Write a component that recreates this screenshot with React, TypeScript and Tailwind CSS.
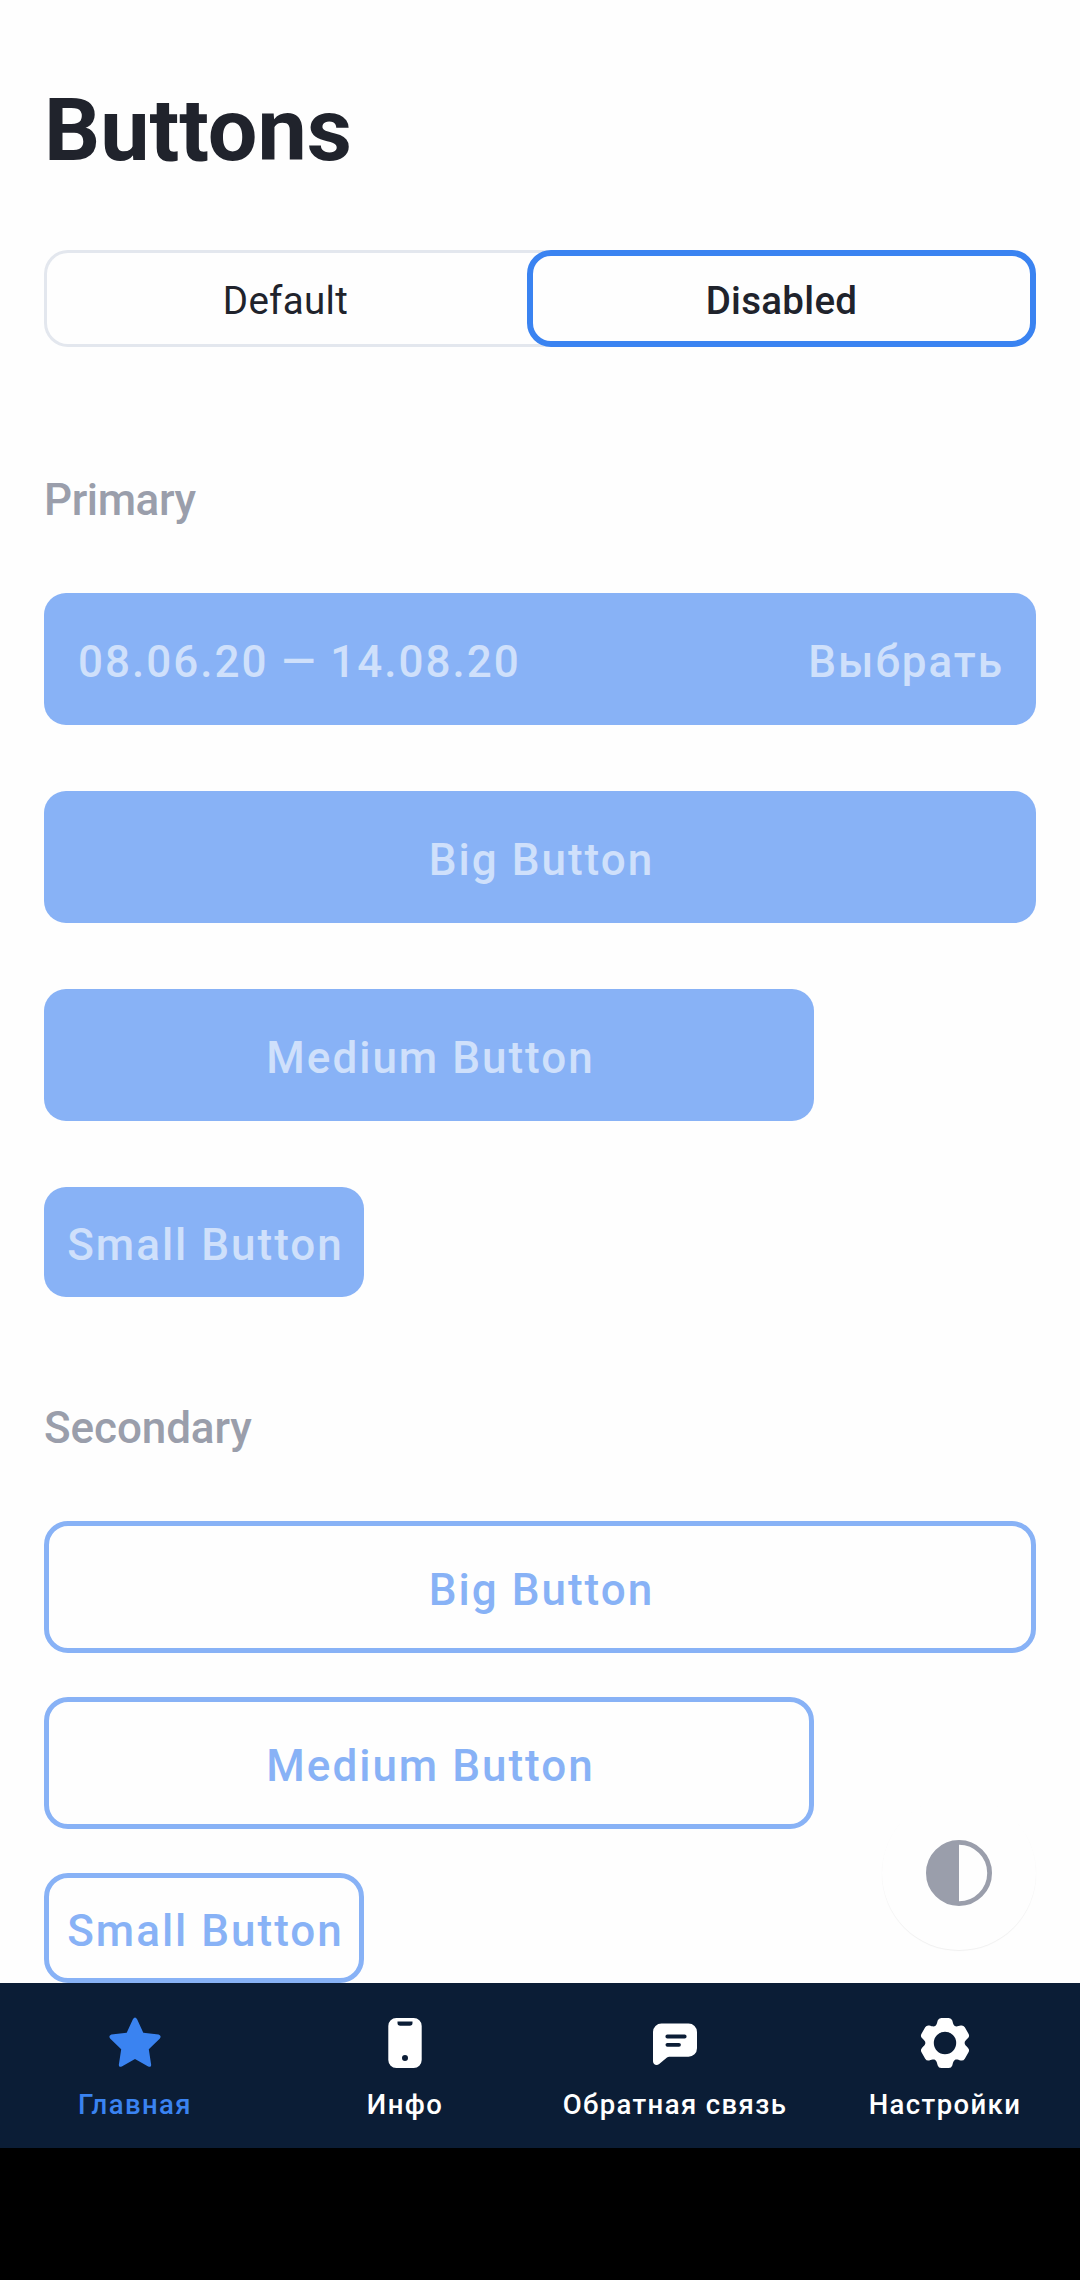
import type { ReactNode } from 'react';

function Heading({ children, className }: { children: ReactNode; className: string }) {
  return (
    <h2 className={`text-[44px] leading-[52px] font-medium text-[#9a9eab] ${className}`}>
      {children}
    </h2>
  );
}

const sizes = {
  big: 'w-full h-[132px]',
  medium: 'w-[770px] h-[132px]',
  small: 'w-[320px] h-[110px]',
};

const variants = {
  primary: 'bg-[#88b2f6] text-[#cfe0fb] rounded-[22px]',
  secondary: 'border-[5px] border-[#88b2f6] text-[#88b2f6] rounded-[24px]',
};

function Button({
  size,
  variant,
  children,
}: {
  size: keyof typeof sizes;
  variant: keyof typeof variants;
  children: ReactNode;
}) {
  return (
    <button
      disabled
      className={`flex items-center justify-center whitespace-nowrap pt-[6px] pl-[3px] text-[44px] leading-[52px] font-medium tracking-[2px] ${sizes[size]} ${variants[variant]}`}
    >
      {children}
    </button>
  );
}

function StarIcon() {
  return (
    <svg viewBox="0 0 66 66" className="size-[66px]" fill="currentColor">
      <path d="M30.9 9.2Q33 6 35.1 9.2L41.3 22.7L56.6 24.4Q59.8 25.5 57.9 28.6L46.8 39.3L49.2 54.9Q49 57.8 46.2 56.4L33 49L19.8 56.4Q17 57.8 16.8 54.9L19.2 39.3L8.1 28.6Q6.2 25.5 9.4 24.4L24.7 22.7Z" />
    </svg>
  );
}

function PhoneIcon() {
  return (
    <svg viewBox="0 0 66 66" className="size-[66px]" fill="currentColor" fillRule="evenodd">
      <path d="M24.3 8H41.7A8 8 0 0 1 49.7 16V50A8 8 0 0 1 41.7 58H24.3A8 8 0 0 1 16.3 50V16A8 8 0 0 1 24.3 8ZM25.5 11.5V13Q25.5 15.7 28.2 15.7H37.8Q40.5 15.7 40.5 13V11.5ZM36 48A3 3 0 1 0 30 48A3 3 0 1 0 36 48Z" />
    </svg>
  );
}

function MessageIcon() {
  return (
    <svg viewBox="0 0 66 66" className="size-[66px]" fill="currentColor" fillRule="evenodd">
      <path d="M19.5 13.4H46.5A8.5 8.5 0 0 1 55 21.9V38.3A8.5 8.5 0 0 1 46.5 46.8H27.2Q26 46.8 25 47.6L17.2 54.1C14.5 56.3 11 54.6 11 51.2V21.9A8.5 8.5 0 0 1 19.5 13.4ZM25.4 24.4A2 2 0 0 0 25.4 28.4H42.6A2 2 0 0 0 42.6 24.4ZM25.4 32.9A1.9 1.9 0 0 0 25.4 36.7H37A1.9 1.9 0 0 0 37 32.9Z" />
    </svg>
  );
}

// One tooth of the gear: valley, flank, rounded tip, flank, valley.
const tooth: [number, number][] = [
  [-8.2, -17.9],
  [-8, -20],
  [-7.3, -22.4],
  [-6.4, -25],
  [-3.7, -25],
  [3.7, -25],
  [6.4, -25],
  [7.3, -22.4],
  [8, -20],
  [8.2, -17.9],
  [9.8, -17],
];

function gearPath() {
  let d = 'M-9.8 -17';
  for (let k = 0; k < 6; k++) {
    const a = (k * Math.PI) / 3;
    const p = tooth.map(
      ([x, y]) =>
        `${(x * Math.cos(a) - y * Math.sin(a)).toFixed(2)} ${(x * Math.sin(a) + y * Math.cos(a)).toFixed(2)}`,
    );
    d += `C${p[0]} ${p[1]} ${p[2]}Q${p[3]} ${p[4]}L${p[5]}Q${p[6]} ${p[7]}C${p[8]} ${p[9]} ${p[10]}`;
  }
  return d + 'ZM11.2 0A11.2 11.2 0 1 0 -11.2 0A11.2 11.2 0 1 0 11.2 0Z';
}

function GearIcon() {
  return (
    <svg viewBox="-33 -33 66 66" className="size-[66px]" fill="currentColor" fillRule="evenodd">
      <path d={gearPath()} />
    </svg>
  );
}

const tabs = [
  { label: 'Главная', icon: <StarIcon />, color: 'text-[#3a83f1]' },
  { label: 'Инфо', icon: <PhoneIcon />, color: 'text-white' },
  { label: 'Обратная связь', icon: <MessageIcon />, color: 'text-white' },
  { label: 'Настройки', icon: <GearIcon />, color: 'text-white' },
];

export default function App() {
  return (
    <div className="flex h-[2280px] w-[1080px] flex-col overflow-hidden bg-black font-['Roboto',sans-serif]">
      <main className="relative h-[1983px] shrink-0 overflow-hidden bg-[#fefefe] px-[44px] pt-[78px]">
        <h1 className="text-[88px] leading-[104px] font-bold text-[#20232c]">Buttons</h1>

        <div className="mt-[68px] flex h-[97px] text-[38.5px] leading-[46px] tracking-[0.3px] text-[#20232c]">
          <div className="-mr-[24px] flex flex-1 rounded-l-[24px] border-[3px] border-r-0 border-[#e3e7ee] bg-[#fefefe] pr-[27px]">
            <button className="flex flex-1 items-center justify-center pt-[4px]">Default</button>
          </div>
          <button className="z-10 flex w-[509px] items-center justify-center rounded-[24px] border-[6px] border-[#3a83f1] bg-[#fefefe] pt-[4px] font-medium">
            Disabled
          </button>
        </div>

        <Heading className="mt-[127px] tracking-[-0.4px]">Primary</Heading>
        <div className="mt-[67px] flex flex-col gap-[66px]">
          <button
            disabled
            className="flex h-[132px] w-full items-center justify-between rounded-[22px] bg-[#88b2f6] pt-[6px] pr-[32px] pl-[34px] text-[44px] leading-[52px] font-medium tracking-[2px] text-[#cfe0fb]"
          >
            <span>08.06.20 — 14.08.20</span>
            <span>Выбрать</span>
          </button>
          <Button size="big" variant="primary">Big Button</Button>
          <Button size="medium" variant="primary">Medium Button</Button>
          <Button size="small" variant="primary">Small Button</Button>
        </div>

        <Heading className="mt-[105px] tracking-[-0.1px]">Secondary</Heading>
        <div className="mt-[67px] flex flex-col gap-[44px]">
          <Button size="big" variant="secondary">Big Button</Button>
          <Button size="medium" variant="secondary">Medium Button</Button>
          <Button size="small" variant="secondary">Small Button</Button>
        </div>

        <button
          aria-label="Theme"
          className="absolute right-[44px] bottom-[33px] flex size-[154px] items-center justify-center rounded-full bg-[#fefefe] text-[#9a9eab] shadow-[0_1px_1px_0_rgba(0,0,0,0.06)]"
        >
          <svg viewBox="0 0 66 66" className="size-[66px]" fill="currentColor">
            <circle cx="33" cy="33" r="30.6" fill="none" stroke="currentColor" strokeWidth="4.8" />
            <path d="M33 2A31 31 0 0 0 33 64Z" />
          </svg>
        </button>
      </main>

      <nav className="grid h-[165px] shrink-0 grid-cols-4 bg-[#0b1d36]">
        {tabs.map((tab) => (
          <a key={tab.label} className={`flex flex-col items-center pt-[27px] ${tab.color}`}>
            {tab.icon}
            <span className="mt-[12px] text-[27.5px] leading-[34px] font-medium tracking-[1.4px] whitespace-nowrap">
              {tab.label}
            </span>
          </a>
        ))}
      </nav>
    </div>
  );
}
